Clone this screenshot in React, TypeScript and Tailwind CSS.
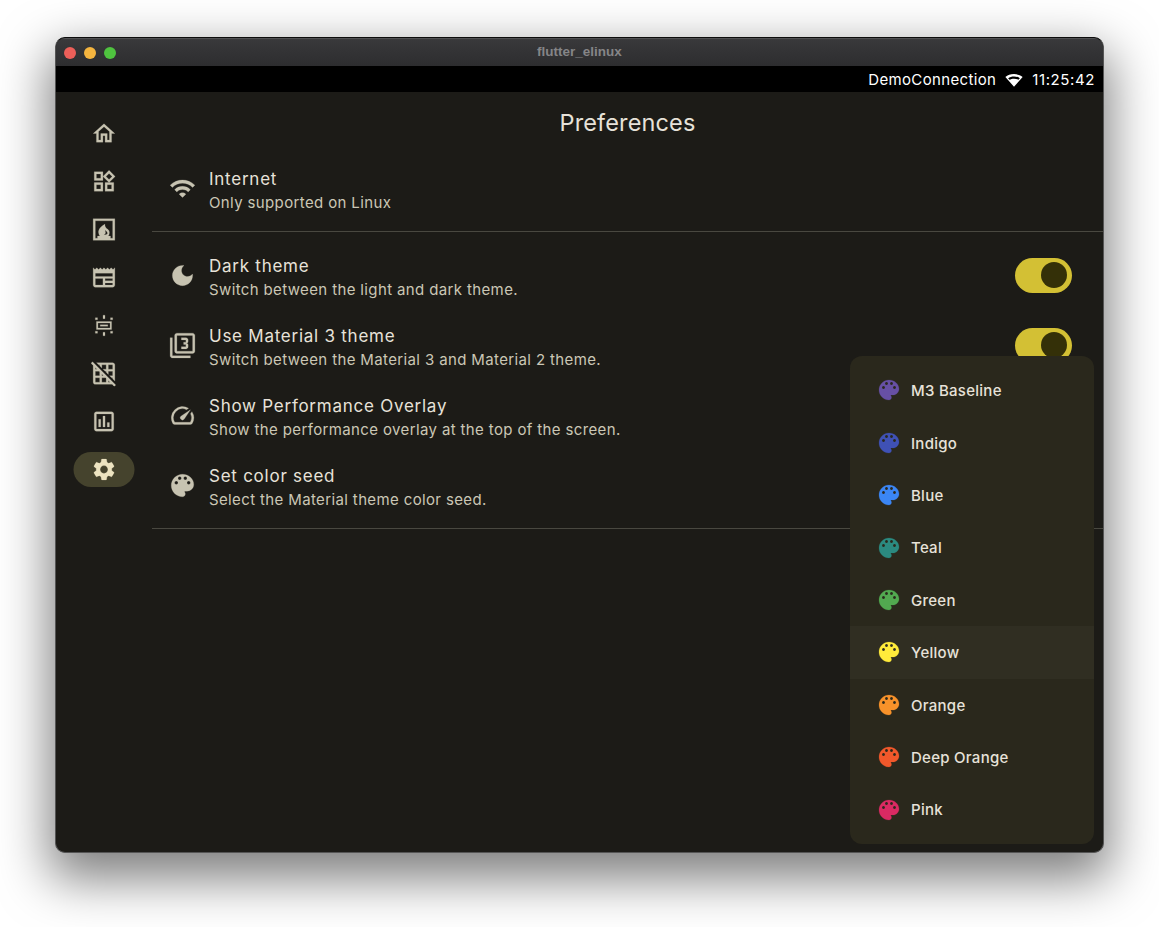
const font = { fontFamily: 'Inter, sans-serif' }

const icons = {
  home: 'M12 5.69l5 4.5V18h-2v-6H9v6H7v-7.81l5-4.5M12 3L2 12h3v8h6v-6h2v6h6v-8h3L12 3z',
  widgets:
    'M16.66 4.52l2.83 2.83-2.83 2.83-2.83-2.83 2.83-2.83M9 5v4H5V5h4m10 10v4h-4v-4h4M9 15v4H5v-4h4m7.66-13.31L11 7.34 16.66 13l5.66-5.66-5.66-5.65zM11 3H3v8h8V3zm10 10h-8v8h8v-8zm-10 0H3v8h8v-8z',
  fireplace:
    'M2,2v20h20V2H2z M11.86,16.96c0.76-0.24,1.4-1.04,1.53-1.63c0.13-0.56-0.1-1.05-0.2-1.6c-0.08-0.46-0.07-0.85,0.08-1.28 c0.54,1.21,2.15,1.64,1.98,3.18C15.06,16.33,13.14,17.22,11.86,16.96z M20,20h-2v-2h-2.02c0.63-0.84,1.02-1.87,1.02-3 c0-1.89-1.09-2.85-1.85-3.37C12.2,9.61,13,7,13,7c-6.73,3.57-6.02,7.47-6,8c0.03,0.96,0.49,2.07,1.23,3H6v2H4V4h16V20z',
  newspaper:
    'M22 3l-1.67 1.67L18.67 3 17 4.67 15.33 3l-1.66 1.67L12 3l-1.67 1.67L8.67 3 7 4.67 5.33 3 3.67 4.67 2 3v16c0 1.1.9 2 2 2h16c1.1 0 2-.9 2-2V3zM11 19H4v-6h7v6zm9 0h-7v-2h7v2zm0-4h-7v-2h7v2zm0-4H4V8h16v3z',
  gridOff:
    'M8 4v.89l2 2V4h4v4h-2.89l2 2H14v.89l2 2V10h4v4h-2.89l2 2H20v.89l2 2V4c0-1.1-.9-2-2-2H5.11l2 2H8zm8 0h4v4h-4V4zM1.41 1.14L0 2.55l2 2V20c0 1.1.9 2 2 2h15.45l2.01 2.01 1.41-1.41L1.41 1.14zM10 12.55L11.45 14H10v-1.45zm-6-6L5.45 8H4V6.55zM8 20H4v-4h4v4zm0-6H4v-4h3.45l.55.55V14zm6 6h-4v-4h3.45l.55.55V20zm2 0v-1.45L17.45 20H16z',
  chart:
    'M9 17H7v-7h2v7zm4 0h-2V7h2v10zm4 0h-2v-4h2v4zm2 2H5V5h14v14zm0-16H5c-1.1 0-2 .9-2 2v14c0 1.1.9 2 2 2h14c1.1 0 2-.9 2-2V5c0-1.1-.9-2-2-2z',
  settings:
    'M19.14 12.94c.04-.3.06-.61.06-.94 0-.32-.02-.64-.07-.94l2.03-1.58c.18-.14.23-.41.12-.61l-1.92-3.32c-.12-.22-.37-.29-.59-.22l-2.39.96c-.5-.38-1.03-.7-1.62-.94l-.36-2.54c-.04-.24-.24-.41-.48-.41h-3.84c-.24 0-.43.17-.47.41l-.36 2.54c-.59.24-1.13.57-1.62.94l-2.39-.96c-.22-.08-.47 0-.59.22L2.74 8.87c-.12.21-.08.47.12.61l2.03 1.58c-.05.3-.09.63-.09.94s.02.64.07.94l-2.03 1.58c-.18.14-.23.41-.12.61l1.92 3.32c.12.22.37.29.59.22l2.39-.96c.5.38 1.03.7 1.62.94l.36 2.54c.05.24.24.41.48.41h3.84c.24 0 .44-.17.47-.41l.36-2.54c.59-.24 1.13-.56 1.62-.94l2.39.96c.22.08.47 0 .59-.22l1.92-3.32c.12-.22.07-.47-.12-.61l-2.01-1.58zM12 15.6c-1.98 0-3.6-1.62-3.6-3.6s1.62-3.6 3.6-3.6 3.6 1.62 3.6 3.6-1.62 3.6-3.6 3.6z',
  wifi: 'M1 9l2 2c4.97-4.97 13.03-4.97 18 0l2-2C16.93 2.93 7.08 2.93 1 9zm8 8l3 3 3-3c-1.65-1.66-4.34-1.66-6 0zm-4-4l2 2c2.76-2.76 7.24-2.76 10 0l2-2C15.14 9.14 8.87 9.14 5 13z',
  moon: 'M12 3c-4.97 0-9 4.03-9 9s4.03 9 9 9 9-4.03 9-9c0-.46-.04-.92-.1-1.36-.98 1.37-2.58 2.26-4.4 2.26-2.98 0-5.4-2.42-5.4-5.4 0-1.81.89-3.42 2.26-4.4-.44-.06-.9-.1-1.36-.1z',
  filter3:
    'M21 1H7c-1.1 0-2 .9-2 2v14c0 1.1.9 2 2 2h14c1.1 0 2-.9 2-2V3c0-1.1-.9-2-2-2zm0 16H7V3h14v14zM3 5H1v16c0 1.1.9 2 2 2h16v-2H3V5zm14 8v-1.5c0-.83-.67-1.5-1.5-1.5.83 0 1.5-.67 1.5-1.5V7c0-1.11-.9-2-2-2h-4v2h4v2h-2v2h2v2h-4v2h4c1.1 0 2-.89 2-2z',
  speed:
    'M20.38 8.57l-1.23 1.85a8 8 0 0 1-.22 7.58H5.07A8 8 0 0 1 15.58 6.85l1.85-1.23A10 10 0 0 0 3.35 19a2 2 0 0 0 1.72 1h13.85a2 2 0 0 0 1.74-1 10 10 0 0 0-.27-10.44zm-9.79 6.84a2 2 0 0 0 2.83 0l5.66-8.49-8.49 5.66a2 2 0 0 0 0 2.83z',
  palette:
    'M12 2C6.49 2 2 6.49 2 12s4.49 10 10 10c1.38 0 2.5-1.12 2.5-2.5 0-.61-.23-1.2-.64-1.67-.08-.1-.13-.21-.13-.33 0-.28.22-.5.5-.5H16c3.31 0 6-2.69 6-6 0-4.96-4.49-9-10-9zm-5.5 9c-.83 0-1.5-.67-1.5-1.5S5.67 8 6.5 8 8 8.67 8 9.5 7.33 11 6.5 11zm3-4C8.67 7 8 6.33 8 5.5S8.67 4 9.5 4s1.5.67 1.5 1.5S10.33 7 9.5 7zm5 0c-.83 0-1.5-.67-1.5-1.5S13.67 4 14.5 4s1.5.67 1.5 1.5S15.33 7 14.5 7zm3 4c-.83 0-1.5-.67-1.5-1.5S16.67 8 17.5 8s1.5.67 1.5 1.5-.67 1.5-1.5 1.5z',
  elevation:
    'M5 8.300h14v7.400H5zM6.400 9.700v4.600h11.200V9.700zM8.500 11.300h7v1.400h-7zM11.100 2.500h1.800v3.200h-1.800zM11.100 18.300h1.800v3.200h-1.800zM4 4.800h2v2H4zM18 4.800h2v2h-2zM4 17.200h2v2H4zM18 17.200h2v2h-2z',
}

function Icon({ d, className }: { d: string; className: string }) {
  return (
    <svg
      viewBox="0 0 24 24"
      className={`shrink-0 ${className}`}
      fill="currentColor"
      fillRule="evenodd"
      stroke="currentColor"
      strokeWidth={0.2}
    >
      <path d={d} />
    </svg>
  )
}

const navItems = [
  icons.home,
  icons.widgets,
  icons.fireplace,
  icons.newspaper,
  icons.elevation,
  icons.gridOff,
  icons.chart,
]

const settingsRows = [
  { icon: icons.moon, title: 'Dark theme', sub: 'Switch between the light and dark theme.', toggle: true },
  { icon: icons.filter3, title: 'Use Material 3 theme', sub: 'Switch between the Material 3 and Material 2 theme.', toggle: true },
  { icon: icons.speed, title: 'Show Performance Overlay', sub: 'Show the performance overlay at the top of the screen.', toggle: false },
  { icon: icons.palette, title: 'Set color seed', sub: 'Select the Material theme color seed.', toggle: false },
]

const seeds = [
  { name: 'M3 Baseline', color: 'text-[#6750a4]' },
  { name: 'Indigo', color: 'text-[#3f51b5]' },
  { name: 'Blue', color: 'text-[#3b86f4]' },
  { name: 'Teal', color: 'text-[#2b8a80]' },
  { name: 'Green', color: 'text-[#52a950]' },
  { name: 'Yellow', color: 'text-[#ffeb3b]' },
  { name: 'Orange', color: 'text-[#f8922a]' },
  { name: 'Deep Orange', color: 'text-[#f1582b]' },
  { name: 'Pink', color: 'text-[#d92a63]' },
]

function ListText({ title, sub }: { title: string; sub: string }) {
  return (
    <div className="flex flex-col">
      <div className="text-[17px] leading-[24px] tracking-[0.75px] text-[#e7e2d9]">{title}</div>
      <div className="text-[15px] leading-[23px] tracking-[0.37px] text-[#cbc7b5]">{sub}</div>
    </div>
  )
}

export default function App() {
  return (
    <div className="w-[1159px] h-[927px] bg-white overflow-hidden pl-[55px] pt-[37px]" style={font}>
      <div className="relative w-[1049px] h-[816px] rounded-[10px] bg-[#1c1b17] border border-[#555555] border-t-[#0c0c0c] overflow-hidden flex flex-col shadow-[0_20px_50px_6px_rgba(0,0,0,0.5)]">
        {/* title bar */}
        <div className="relative h-[28px] shrink-0 flex items-center bg-gradient-to-b from-[#39393b] to-[#2d2d2f] border-t border-[#505052]">
          <div className="flex gap-2 pl-[8px]">
            <span className="w-3 h-3 rounded-full bg-[#ec5f59]" />
            <span className="w-3 h-3 rounded-full bg-[#f5b53f]" />
            <span className="w-3 h-3 rounded-full bg-[#4fc33f]" />
          </div>
          <div className="flex-1 text-center pr-[60px] text-[13.5px] font-bold text-[#858587]" style={{ fontFamily: '"Liberation Sans", sans-serif' }}>
            flutter_elinux
          </div>
        </div>

        {/* status bar */}
        <div className="h-[26px] shrink-0 bg-black flex items-center justify-end pt-[2px] pr-[8px] text-white text-[15px] tracking-[0.35px]">
          <span>DemoConnection</span>
          <svg viewBox="0 0 24 24" className="w-[18px] h-[18px] mx-[9px]" fill="currentColor" fillRule="evenodd">
            <path d="M12 4C7.3 4 3.3 5.600 0.500 8L12 21 23.500 8C20.700 5.600 16.700 4 12 4zM12 7.200c3 0 5.700 0.900 7.800 2.300L18 11.700c-1.600-0.900-3.700-1.500-6-1.500s-4.400 0.600-6 1.500L4.200 9.500C6.300 8.100 9 7.200 12 7.200z" />
          </svg>
          <span className="tracking-[0.6px]">11:25:42</span>
        </div>

        {/* main */}
        <div className="flex flex-1 min-h-0">
          <div className="w-[96px] shrink-0 flex flex-col items-center pt-[17px]">
            {navItems.map((d, i) => (
              <div key={i} className="h-[48px] flex items-center justify-center">
                <Icon d={d} className="w-[26px] h-[26px] text-[#c7c3b1] translate-y-[0.5px]" />
              </div>
            ))}
            <div className="h-[48px] flex items-center justify-center">
              <div className="w-[61px] h-[35px] rounded-full bg-[#45432d] flex items-center justify-center -translate-x-[0.5px]">
                <Icon d={icons.settings} className="w-[26px] h-[26px] text-[#ece3c0] translate-x-[0.5px] translate-y-[0.5px]" />
              </div>
            </div>
          </div>

          <div className="flex-1 min-w-0">
            <h1 className="text-[23.5px] leading-[28px] tracking-[0.13px] text-[#e7e2d9] text-center pt-[17px]">Preferences</h1>

            <div className="flex items-center gap-[13px] pl-[17px] h-[56px] mt-[25px]">
              <Icon d={icons.wifi} className="w-[27px] h-[27px] text-[#c7c3b1] -translate-y-[2px]" />
              <ListText title="Internet" sub="Only supported on Linux" />
            </div>
            <div className="h-px bg-[#494840] mt-[13px]" />

            <div className="pt-[10px] pb-[6px] border-b border-[#494840]">
              {settingsRows.map((row) => (
                <div key={row.title} className="h-[70px] flex items-center pl-[17px] pr-[31px] gap-[13px]">
                  <Icon d={row.icon} className="w-[27px] h-[27px] text-[#c7c3b1] -translate-y-[2px]" />
                  <div className="flex-1 min-w-0">
                    <ListText title={row.title} sub={row.sub} />
                  </div>
                  {row.toggle && (
                    <div className="w-[57px] h-[35px] mb-[4px] rounded-full bg-[#d3c034] flex items-center justify-end pr-[5px]">
                      <div className="w-[26px] h-[26px] rounded-full bg-[#343008]" />
                    </div>
                  )}
                </div>
              ))}
            </div>
          </div>
        </div>

        {/* color seed menu */}
        <div className="absolute left-[794px] top-[318px] w-[244px] h-[488px] pt-[8.3px] rounded-[12px] bg-[#2a281c]">
          {seeds.map((seed) => (
            <div
              key={seed.name}
              className={`h-[52.4px] flex items-center pl-[27px] gap-[10px] ${seed.name === 'Yellow' ? 'bg-[#302e22]' : ''}`}
            >
              <Icon d={icons.palette} className={`w-6 h-6 ${seed.color}`} />
              <span className="text-[15px] font-medium tracking-[0.27px] text-[#e7e2d9] translate-y-[1px]">{seed.name}</span>
            </div>
          ))}
        </div>
      </div>
    </div>
  )
}
